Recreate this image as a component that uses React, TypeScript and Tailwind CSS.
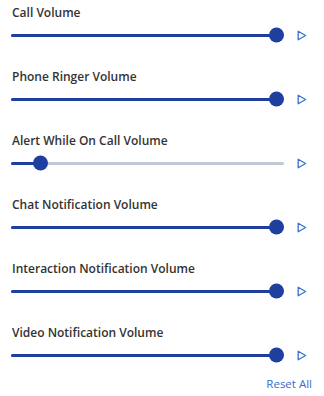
import React from "react";

const rows = [
  { label: "Call Volume", value: 100 },
  { label: "Phone Ringer Volume", value: 100 },
  { label: "Alert While On Call Volume", value: 8.5 },
  { label: "Chat Notification Volume", value: 100 },
  { label: "Interaction Notification Volume", value: 100 },
  { label: "Video Notification Volume", value: 100 },
];

function Play() {
  return (
    <svg width="10" height="11" viewBox="0 0 10 11" className="block">
      <path d="M1.2 1.2 L8.6 5.5 L1.2 9.8 Z" fill="none" stroke="#3d6fd6" strokeWidth="1.3" strokeLinejoin="round" />
    </svg>
  );
}

function Slider({ value }: { value: number }) {
  // track 273 wide, thumb 15 wide
  const pos = 7.5 + (258 * value) / 100;
  return (
    <div className="relative h-4 w-[273px] flex items-center">
      <div className="h-[3px] w-full rounded-full bg-[#c3c8d6]" />
      <div className="absolute left-0 h-[3px] rounded-full bg-[#1f3f9e]" style={{ width: pos }} />
      <div
        className="absolute top-1/2 h-[15px] w-[15px] -translate-y-1/2 rounded-full bg-[#1f3f9e]"
        style={{ left: pos - 7.5 }}
      />
    </div>
  );
}

export default function App() {
  return (
    <div className="w-[324px] h-[396px] bg-white px-[11px] font-['Open_Sans','Noto_Sans',sans-serif]">
      {rows.map((r, i) => (
        <div key={i} className={`pt-[5px] ${i === rows.length - 1 ? "pb-0" : "pb-[21px]"}`}>
          <div className="h-4 text-[12px] leading-4 font-semibold text-[#333333] pl-px">{r.label}</div>
          <div className="mt-[6px] flex items-center">
            <Slider value={r.value} />
            <div className="ml-[13px]">
              <Play />
            </div>
          </div>
        </div>
      ))}
      <div className="mt-[13px] flex justify-end pr-px">
        <span className="text-[11.5px] leading-4 text-[#3a6cc8]">Reset All</span>
      </div>
    </div>
  );
}
